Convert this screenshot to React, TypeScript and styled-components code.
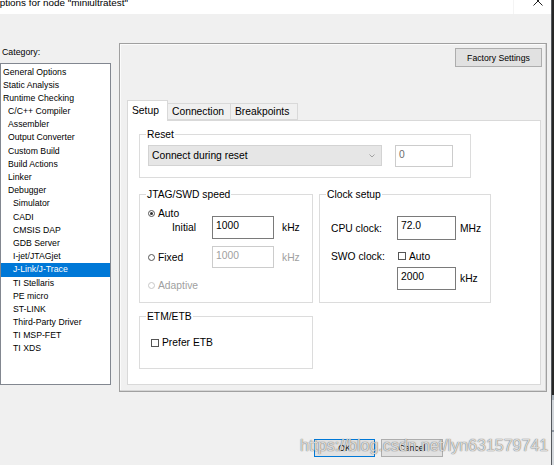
import React from "react";
import styled, { createGlobalStyle } from "styled-components";

const Global = createGlobalStyle`
  html, body { margin: 0; padding: 0; background: #f0f0f0; }
  body { font-family: "Liberation Sans", Arial, sans-serif; color: #000; }
  * { box-sizing: border-box; }
`;

const Root = styled.div`
  position: relative;
  display: flex;
  width: 554px;
  height: 465px;
  overflow: hidden;
`;

const Window = styled.div`
  width: 551px;
  display: flex;
  flex-direction: column;
  background: #f0f0f0;
`;

const Edge = styled.div`
  width: 3px;
  background: linear-gradient(#262626 0 395px, #a7b0b9 395px 400px, #d2d6da 400px 430px, #8d96a0 430px 432px, #d5d9dd 432px);
  border-left: 1px solid #55595e;
`;

const TitleBar = styled.div`
  height: 14px;
  background: #fff;
  display: flex;
  justify-content: space-between;
  overflow: hidden;
`;

const TitleText = styled.div`
  font-size: 9.9px;
  line-height: 10px;
  margin-top: -2px;
  margin-left: -8px;
  white-space: nowrap;
  color: #000;
`;

const CloseBox = styled.div`
  width: 38px;
  height: 14px;
  border-left: 1px solid #f4f4f4;
  display: flex;
  justify-content: flex-end;
  padding-right: 8px;
`;

const CloseIcon = styled.svg`
  margin-top: -4px;
`;

const Body = styled.div`
  flex: 1;
  display: flex;
  flex-direction: column;
  padding: 29px 4px 0 0;
`;

const Main = styled.div`
  display: flex;
  gap: 8px;
`;

const Left = styled.div`
  width: 111px;
  display: flex;
  flex-direction: column;
`;

const CategoryLabel = styled.div`
  margin: 3px 0 0 2px;
  height: 12px;
  line-height: 12px;
  font-size: 8.8px;
`;

const ListBox = styled.div`
  margin-top: 5px;
  height: 322px;
  background: #fff;
  border: 1px solid #828790;
  padding-top: 1.5px;
`;

const ListItem = styled.div<{ $level: number; $selected?: boolean }>`
  height: 13.2px;
  line-height: 13.2px;
  font-size: 8.7px;
  white-space: nowrap;
  padding-left: ${(p) => 2 + p.$level * 5}px;
  background: ${(p) => (p.$selected ? "#0078d7" : "transparent")};
  color: ${(p) => (p.$selected ? "#fff" : "#000")};
`;

const Frame = styled.div`
  width: 428px;
  height: 349px;
  border: 1px solid #a0a0a0;
  box-shadow: inset -1px -1px 0 #d6d6d6, inset 1px 1px 0 #fbfbfb;
  padding: 4px 5px 6px 7px;
  display: flex;
  flex-direction: column;
`;

const FrameHeader = styled.div`
  display: flex;
  justify-content: flex-end;
  margin-right: -1px;
`;

const Button = styled.div<{ $w: number; $default?: boolean }>`
  width: ${(p) => p.$w}px;
  height: ${(p) => (p.$default !== undefined ? 18 : 19)}px;
  background: #e1e1e1;
  border: 1px solid ${(p) => (p.$default ? "#0078d7" : "#adadad")};
  display: flex;
  align-items: center;
  justify-content: center;
  font-size: 8.7px;
  color: #000;
`;

const TabStrip = styled.div`
  margin-top: 33px;
  height: 20px;
  display: flex;
  align-items: flex-end;
  position: relative;
  z-index: 1;
`;

const Tab = styled.div<{ $w: number; $active?: boolean }>`
  width: ${(p) => p.$w}px;
  height: ${(p) => (p.$active ? 21 : 17)}px;
  margin-bottom: ${(p) => (p.$active ? -1 : 0)}px;
  margin-left: ${(p) => (p.$active ? 0 : -1)}px;
  background: ${(p) => (p.$active ? "#fff" : "#f0f0f0")};
  border: 1px solid #d9d9d9;
  border-bottom: ${(p) => (p.$active ? "none" : "1px solid #d9d9d9")};
  font-size: 10.3px;
  line-height: ${(p) => (p.$active ? 20 : 15)}px;
  padding-left: 4px;
  white-space: nowrap;
`;

const TabPanel = styled.div`
  height: 265px;
  background: #fff;
  border: 1px solid #d9d9d9;
  padding: 6.5px 0 0 11px;
  display: flex;
  flex-direction: column;
  align-items: flex-start;
`;

const Group = styled.fieldset<{ $w: number; $pt: number; $pb: number; $pl: number }>`
  width: ${(p) => p.$w}px;
  margin: 0;
  min-width: 0;
  border: 1px solid #dcdcdc;
  padding: ${(p) => `${p.$pt}px 0 ${p.$pb}px ${p.$pl}px`};
  display: flex;
  flex-direction: column;
  align-items: flex-start;
  & > legend {
    margin-left: ${(p) => 6 - p.$pl}px;
  }
`;

const Legend = styled.legend`
  font-size: 10.3px;
  line-height: 13px;
  padding: 0 1px;
`;

const GroupRow = styled.div`
  display: flex;
  gap: 6px;
  margin-top: 10px;
`;

const EtmWrap = styled.div`
  margin-top: 7px;
`;

const ResetRow = styled.div`
  display: flex;
  align-items: flex-start;
  gap: 13px;
`;

const Select = styled.div`
  width: 234px;
  height: 21px;
  background: #e6e6e6;
  border: 1px solid #d3d3d3;
  display: flex;
  align-items: center;
  justify-content: space-between;
  padding: 0 6px 0 3px;
  font-size: 10.3px;
`;

const TextBox = styled.div<{ $w: number; $h: number; $disabled?: boolean; $muted?: boolean }>`
  width: ${(p) => p.$w}px;
  height: ${(p) => p.$h}px;
  flex: none;
  background: #fff;
  border: 1px solid ${(p) => (p.$disabled || p.$muted ? "#cccccc" : "#7a7a7a")};
  color: ${(p) => (p.$disabled ? "#a0a0a0" : p.$muted ? "#6d6d6d" : "#000")};
  font-size: 10.3px;
  line-height: 14px;
  padding: 2px 0 0 3px;
`;

const Line = styled.div<{ $mt: number; $h: number }>`
  display: flex;
  align-items: center;
  height: ${(p) => p.$h}px;
  margin-top: ${(p) => p.$mt}px;
  font-size: 10.3px;
  white-space: nowrap;
`;

const Cell = styled.div<{ $w: number; $pl?: number; $disabled?: boolean }>`
  width: ${(p) => p.$w}px;
  flex: none;
  padding-left: ${(p) => p.$pl ?? 0}px;
  display: flex;
  align-items: center;
  color: ${(p) => (p.$disabled ? "#a0a0a0" : "#000")};
`;

const Unit = styled.span<{ $ml: number; $disabled?: boolean }>`
  margin-left: ${(p) => p.$ml}px;
  color: ${(p) => (p.$disabled ? "#a0a0a0" : "#000")};
`;

const Radio = styled.span<{ $checked?: boolean; $disabled?: boolean }>`
  width: 7px;
  height: 7px;
  border-radius: 50%;
  border: 1px solid ${(p) => (p.$disabled ? "#c8c8c8" : "#555")};
  margin-right: 3px;
  display: inline-flex;
  align-items: center;
  justify-content: center;
  flex: none;
  &::after {
    content: "";
    width: 3px;
    height: 3px;
    border-radius: 50%;
    background: ${(p) => (p.$checked ? "#333" : "transparent")};
  }
`;

const Check = styled.span`
  width: 8px;
  height: 8px;
  border: 1px solid #555;
  background: #fff;
  margin-right: 3px;
  flex: none;
`;

const Footer = styled.div`
  display: flex;
  gap: 6px;
  padding-left: 314px;
  margin-top: 47px;
`;

const Watermark = styled.div`
  position: absolute;
  left: 300px;
  top: 437px;
  font-size: 16px;
  line-height: 18px;
  color: rgba(255, 255, 255, 0.75);
  text-shadow: 0 0 1px rgba(90, 90, 90, 0.9), 0 0 1px rgba(90, 90, 90, 0.6);
  white-space: nowrap;
  pointer-events: none;
`;

const categories: [string, number][] = [
  ["General Options", 0],
  ["Static Analysis", 0],
  ["Runtime Checking", 0],
  ["C/C++ Compiler", 1],
  ["Assembler", 1],
  ["Output Converter", 1],
  ["Custom Build", 1],
  ["Build Actions", 1],
  ["Linker", 1],
  ["Debugger", 1],
  ["Simulator", 2],
  ["CADI", 2],
  ["CMSIS DAP", 2],
  ["GDB Server", 2],
  ["I-jet/JTAGjet", 2],
  ["J-Link/J-Trace", 2],
  ["TI Stellaris", 2],
  ["PE micro", 2],
  ["ST-LINK", 2],
  ["Third-Party Driver", 2],
  ["TI MSP-FET", 2],
  ["TI XDS", 2],
];

export default function App() {
  return (
    <Root>
      <Global />
      <Window>
        <TitleBar>
          <TitleText>Options for node "miniultratest"</TitleText>
          <CloseBox>
            <CloseIcon width="10" height="10" viewBox="0 0 10 10">
              <path d="M0.5 0.5 L9.5 9.5 M9.5 0.5 L0.5 9.5" stroke="#222" strokeWidth="1" fill="none" />
            </CloseIcon>
          </CloseBox>
        </TitleBar>
        <Body>
          <Main>
            <Left>
              <CategoryLabel>Category:</CategoryLabel>
              <ListBox>
                {categories.map(([name, level]) => (
                  <ListItem key={name} $level={level} $selected={name === "J-Link/J-Trace"}>
                    {name}
                  </ListItem>
                ))}
              </ListBox>
            </Left>
            <Frame>
              <FrameHeader>
                <Button $w={87}>Factory Settings</Button>
              </FrameHeader>
              <TabStrip>
                <Tab $w={41} $active>Setup</Tab>
                <Tab $w={64}>Connection</Tab>
                <Tab $w={68}>Breakpoints</Tab>
              </TabStrip>
              <TabPanel>
                <Group $w={332} $pt={4.5} $pb={10} $pl={8}>
                  <Legend>Reset</Legend>
                  <ResetRow>
                    <Select>
                      <span>Connect during reset</span>
                      <svg width="6" height="4" viewBox="0 0 6 4">
                        <path d="M0.5 0.5 L3 3 L5.5 0.5" stroke="#9a9a9a" strokeWidth="0.9" fill="none" />
                      </svg>
                    </Select>
                    <TextBox $w={58} $h={22} $muted>0</TextBox>
                  </ResetRow>
                </Group>
                <GroupRow>
                  <Group $w={174} $pt={6} $pb={10} $pl={8}>
                    <Legend>JTAG/SWD speed</Legend>
                    <Line $mt={0} $h={12}>
                      <Radio $checked />
                      Auto
                    </Line>
                    <Line $mt={-3} $h={23}>
                      <Cell $w={64} $pl={24}>Initial</Cell>
                      <TextBox $w={62} $h={23}>1000</TextBox>
                      <Unit $ml={8}>kHz</Unit>
                    </Line>
                    <Line $mt={7} $h={22}>
                      <Cell $w={64}>
                        <Radio />
                        Fixed
                      </Cell>
                      <TextBox $w={62} $h={22} $disabled>1000</TextBox>
                      <Unit $ml={8} $disabled>kHz</Unit>
                    </Line>
                    <Line $mt={10} $h={14}>
                      <Cell $w={80} $disabled>
                        <Radio $disabled />
                        Adaptive
                      </Cell>
                    </Line>
                  </Group>
                  <Group $w={172} $pt={6} $pb={10} $pl={11}>
                    <Legend>Clock setup</Legend>
                    <Line $mt={9} $h={24}>
                      <Cell $w={66}>CPU clock:</Cell>
                      <TextBox $w={59} $h={24}>72.0</TextBox>
                      <Unit $ml={4}>MHz</Unit>
                    </Line>
                    <Line $mt={9} $h={14}>
                      <Cell $w={67}>SWO clock:</Cell>
                      <Check />
                      Auto
                    </Line>
                    <Line $mt={4} $h={23}>
                      <Cell $w={66} />
                      <TextBox $w={59} $h={23}>2000</TextBox>
                      <Unit $ml={4}>kHz</Unit>
                    </Line>
                  </Group>
                </GroupRow>
                <EtmWrap>
                  <Group $w={174} $pt={12.5} $pb={18} $pl={11}>
                    <Legend>ETM/ETB</Legend>
                    <Line $mt={0} $h={14}>
                      <Check />
                      Prefer ETB
                    </Line>
                  </Group>
                </EtmWrap>
              </TabPanel>
            </Frame>
          </Main>
          <Footer>
            <Button $w={61} $default>OK</Button>
            <Button $w={62} $default={false}>Cancel</Button>
          </Footer>
        </Body>
      </Window>
      <Edge />
      <Watermark>https://blog.csdn.net/lyn631579741</Watermark>
    </Root>
  );
}
